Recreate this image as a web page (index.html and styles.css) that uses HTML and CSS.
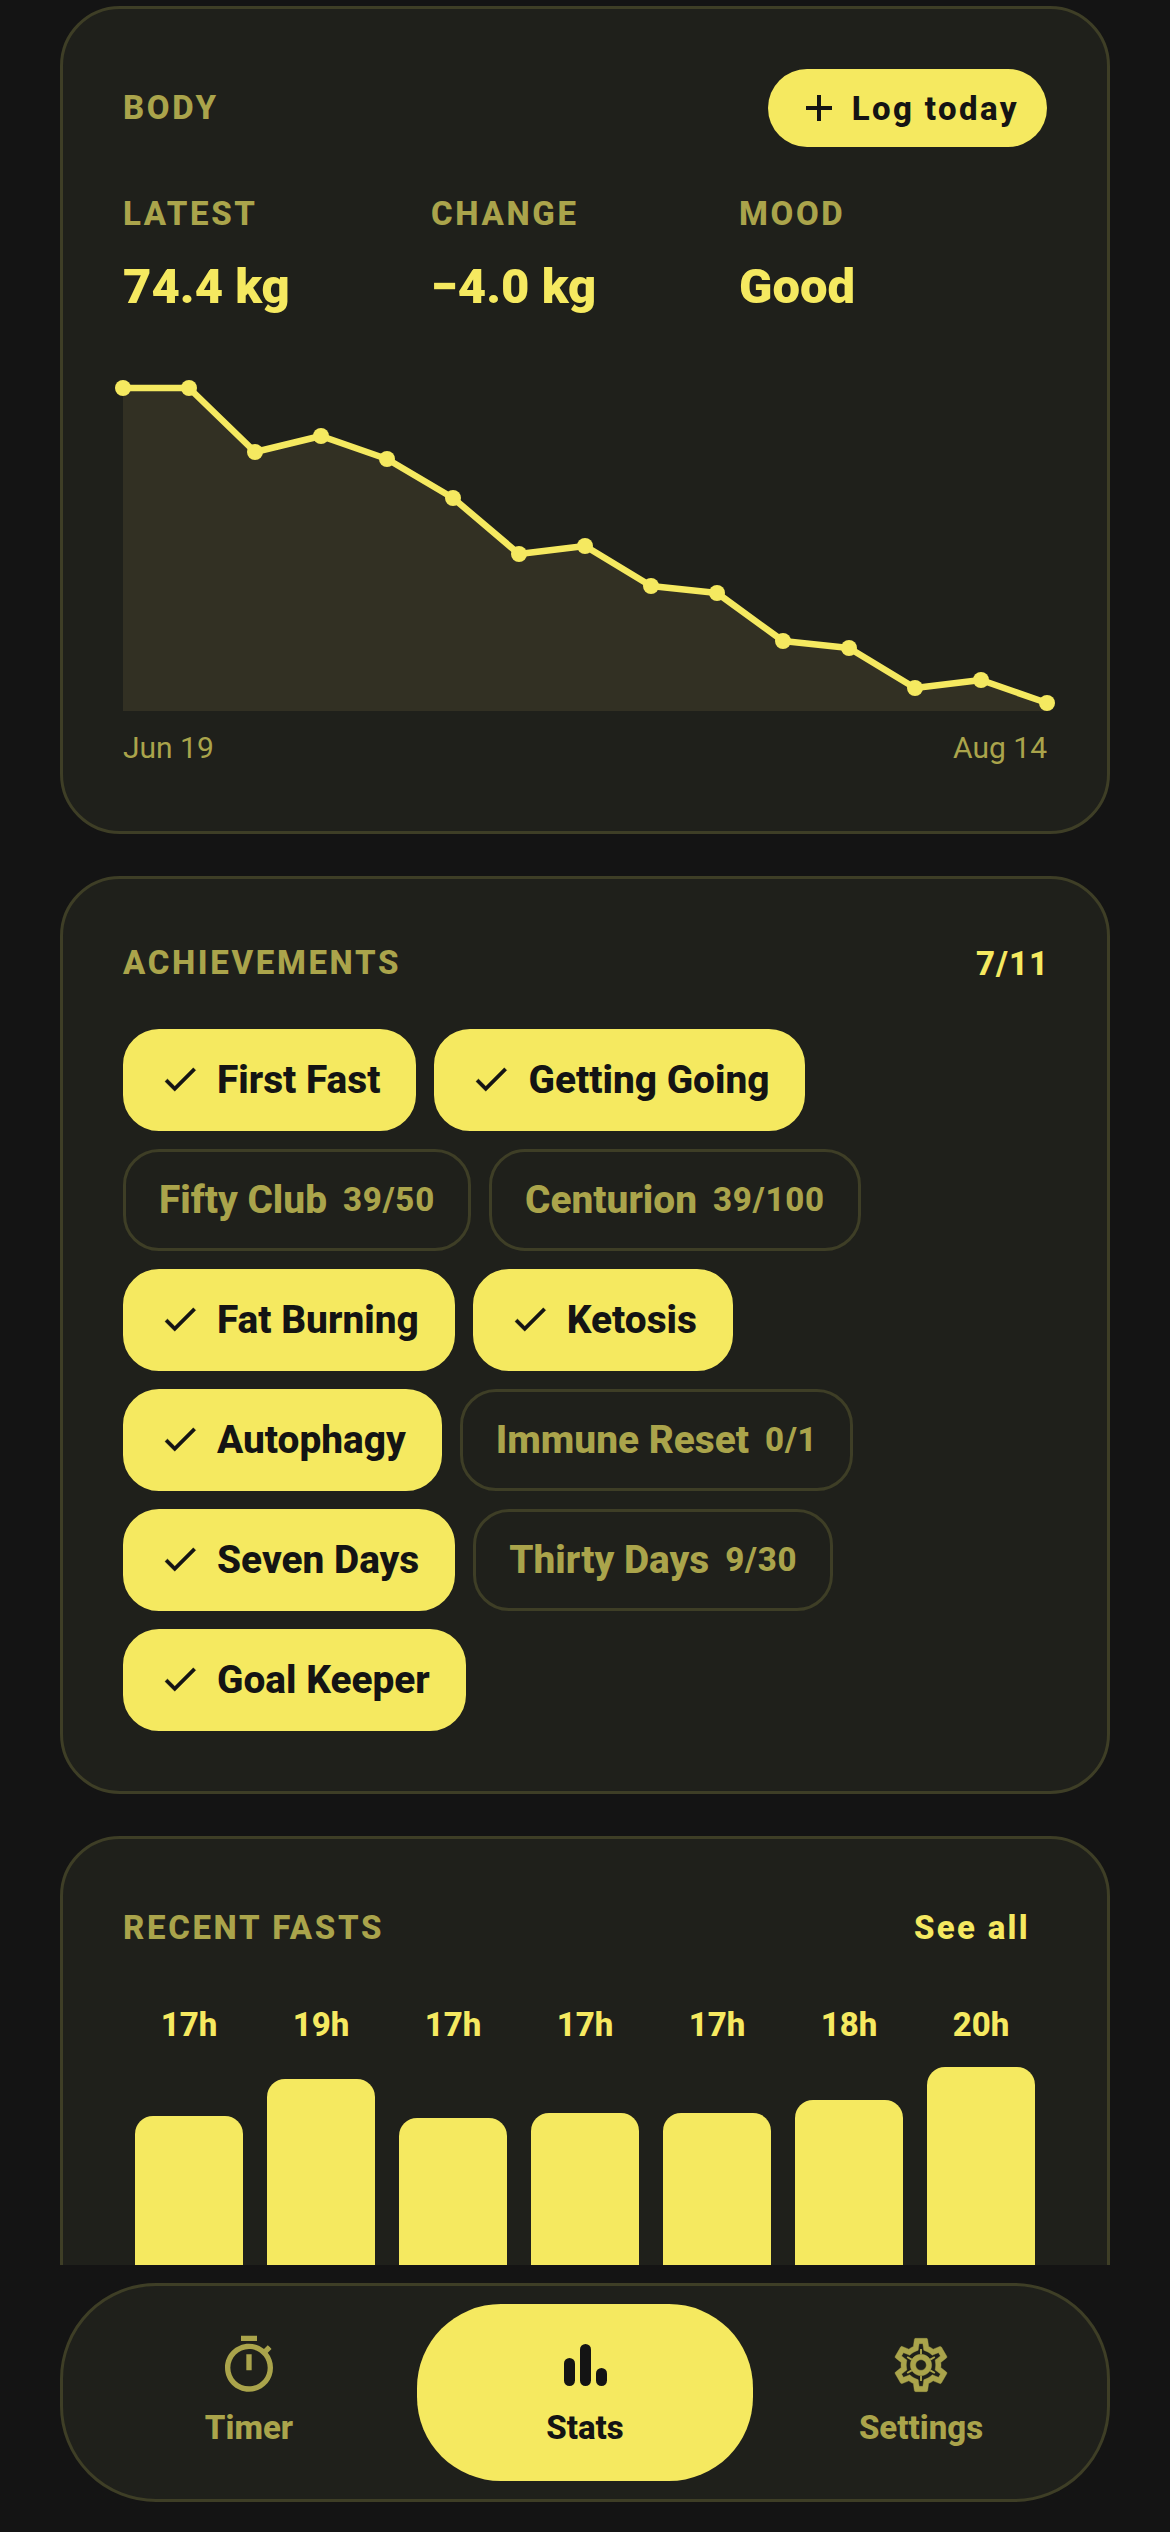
FILE: index.html
```html
<!DOCTYPE html>
<html lang="en">
<head>
    <meta charset="UTF-8">
    <title>Stats</title>
    <link rel="stylesheet" href="styles.css">
</head>
<body>

<main class="scroll">
    <section class="card">
        <div class="card-head body-head">
            <span class="label">BODY</span>
            <button class="log-btn">
                <svg class="plus" viewBox="0 0 26 26"><path d="M13 0v26M0 13h26"/></svg>
                Log today
            </button>
        </div>
        <div class="stats">
            <div class="stat"><div class="label">LATEST</div><div class="value">74.4 kg</div></div>
            <div class="stat"><div class="label">CHANGE</div><div class="value">−4.0 kg</div></div>
            <div class="stat"><div class="label">MOOD</div><div class="value">Good</div></div>
        </div>
        <svg class="chart" viewBox="0 0 924 340">
            <polygon class="chart-fill" points="0,10 66,10 132,74 198,58 264,81 330,120 396,176 462,168 528,208 594,215 660,263 726,270 792,310 858,302 924,325 924,333 0,333"/>
            <polyline class="chart-line" points="0,10 66,10 132,74 198,58 264,81 330,120 396,176 462,168 528,208 594,215 660,263 726,270 792,310 858,302 924,325"/>
            <g class="chart-dots">
                <circle cx="0" cy="10" r="8"/><circle cx="66" cy="10" r="8"/><circle cx="132" cy="74" r="8"/>
                <circle cx="198" cy="58" r="8"/><circle cx="264" cy="81" r="8"/><circle cx="330" cy="120" r="8"/>
                <circle cx="396" cy="176" r="8"/><circle cx="462" cy="168" r="8"/><circle cx="528" cy="208" r="8"/>
                <circle cx="594" cy="215" r="8"/><circle cx="660" cy="263" r="8"/><circle cx="726" cy="270" r="8"/>
                <circle cx="792" cy="310" r="8"/><circle cx="858" cy="302" r="8"/><circle cx="924" cy="325" r="8"/>
            </g>
        </svg>
        <div class="axis"><span>Jun 19</span><span>Aug 14</span></div>
    </section>

    <section class="card">
        <div class="card-head ach-head">
            <span class="label">ACHIEVEMENTS</span>
            <span class="count">7/11</span>
        </div>
        <div class="chips">
            <div class="chip done"><svg class="check" viewBox="0 0 24 24"><path d="M9 16.17L4.83 12l-1.42 1.41L9 19 21 7l-1.41-1.41z"/></svg>First Fast</div>
            <div class="chip done"><svg class="check" viewBox="0 0 24 24"><path d="M9 16.17L4.83 12l-1.42 1.41L9 19 21 7l-1.41-1.41z"/></svg>Getting Going</div>
            <div class="chip">Fifty Club<span class="progress">39/50</span></div>
            <div class="chip">Centurion<span class="progress">39/100</span></div>
            <div class="chip done"><svg class="check" viewBox="0 0 24 24"><path d="M9 16.17L4.83 12l-1.42 1.41L9 19 21 7l-1.41-1.41z"/></svg>Fat Burning</div>
            <div class="chip done"><svg class="check" viewBox="0 0 24 24"><path d="M9 16.17L4.83 12l-1.42 1.41L9 19 21 7l-1.41-1.41z"/></svg>Ketosis</div>
            <div class="chip done"><svg class="check" viewBox="0 0 24 24"><path d="M9 16.17L4.83 12l-1.42 1.41L9 19 21 7l-1.41-1.41z"/></svg>Autophagy</div>
            <div class="chip">Immune Reset<span class="progress">0/1</span></div>
            <div class="chip done"><svg class="check" viewBox="0 0 24 24"><path d="M9 16.17L4.83 12l-1.42 1.41L9 19 21 7l-1.41-1.41z"/></svg>Seven Days</div>
            <div class="chip">Thirty Days<span class="progress">9/30</span></div>
            <div class="chip done"><svg class="check" viewBox="0 0 24 24"><path d="M9 16.17L4.83 12l-1.42 1.41L9 19 21 7l-1.41-1.41z"/></svg>Goal Keeper</div>
        </div>
    </section>

    <section class="card">
        <div class="card-head">
            <span class="label">RECENT FASTS</span>
            <span class="see-all">See all</span>
        </div>
        <div class="bars">
            <div class="bar-col"><div class="bar-hours">17h</div><div class="bar-slot"><div class="bar" style="height: 211px"></div></div></div>
            <div class="bar-col"><div class="bar-hours">19h</div><div class="bar-slot"><div class="bar" style="height: 248px"></div></div></div>
            <div class="bar-col"><div class="bar-hours">17h</div><div class="bar-slot"><div class="bar" style="height: 209px"></div></div></div>
            <div class="bar-col"><div class="bar-hours">17h</div><div class="bar-slot"><div class="bar" style="height: 214px"></div></div></div>
            <div class="bar-col"><div class="bar-hours">17h</div><div class="bar-slot"><div class="bar" style="height: 214px"></div></div></div>
            <div class="bar-col"><div class="bar-hours">18h</div><div class="bar-slot"><div class="bar" style="height: 227px"></div></div></div>
            <div class="bar-col"><div class="bar-hours">20h</div><div class="bar-slot"><div class="bar" style="height: 260px"></div></div></div>
        </div>
    </section>
</main>

<nav class="tabbar">
    <div class="tab">
        <svg class="tab-icon" viewBox="0 0 24 24"><path d="M15 1H9v2h6V1zm-4 13h2V8h-2v6zm8.03-6.61l1.42-1.42c-.43-.51-.9-.99-1.41-1.41l-1.42 1.42C16.07 4.74 14.12 4 12 4c-4.97 0-9 4.03-9 9s4.02 9 9 9 9-4.03 9-9c0-2.12-.74-4.07-1.97-5.61zM12 20c-3.87 0-7-3.13-7-7s3.13-7 7-7 7 3.13 7 7-3.13 7-7 7z"/></svg>
        <span>Timer</span>
    </div>
    <div class="tab active">
        <svg class="tab-icon" viewBox="0 0 64 64"><rect x="11" y="25" width="11" height="28" rx="5.5"/><rect x="27" y="11" width="11" height="42" rx="5.5"/><rect x="43" y="35" width="11" height="18" rx="5.5"/></svg>
        <span>Stats</span>
    </div>
    <div class="tab">
        <svg class="tab-icon gear" viewBox="0 0 24 24">
            <path d="M19.43 12.98c.04-.32.07-.64.07-.98 0-.34-.03-.66-.07-.98l2.11-1.65c.19-.15.24-.42.12-.64l-2-3.46c-.12-.22-.39-.3-.61-.22l-2.49 1c-.52-.4-1.08-.73-1.69-.98l-.38-2.65C14.46 2.18 14.25 2 14 2h-4c-.25 0-.46.18-.49.42l-.38 2.65c-.61.25-1.17.59-1.69.98l-2.49-1c-.23-.09-.49 0-.61.22l-2 3.46c-.13.22-.07.49.12.64l2.11 1.65c-.04.32-.07.65-.07.98 0 .33.03.66.07.98l-2.11 1.65c-.19.15-.24.42-.12.64l2 3.46c.12.22.39.3.61.22l2.49-1c.52.4 1.08.73 1.69.98l.38 2.65c.03.24.24.42.49.42h4c.25 0 .46-.18.49-.42l.38-2.65c.61-.25 1.17-.59 1.69-.98l2.49 1c.23.09.49 0 .61-.22l2-3.46c.12-.22.07-.49-.12-.64l-2.11-1.65zM17.45 11.27c.04.31.05.52.05.73 0 .21-.02.43-.05.73l-.14 1.13.89.7 1.08.84-.7 1.21-1.27-.51-1.04-.42-.9.68c-.43.32-.84.56-1.25.73l-1.06.43-.16 1.13-.2 1.35h-1.4l-.19-1.35-.16-1.13-1.06-.43c-.43-.18-.83-.41-1.23-.71l-.91-.7-1.06.43-1.27.51-.7-1.21 1.08-.84.89-.7-.14-1.13c-.03-.31-.05-.54-.05-.74s.02-.43.05-.73l.14-1.13-.89-.7-1.08-.84.7-1.21 1.27.51 1.04.42.9-.68c.43-.32.84-.56 1.25-.73l1.06-.43.16-1.13.2-1.35h1.39l.19 1.35.16 1.13 1.06.43c.43.18.83.41 1.23.71l.91.7 1.06-.43 1.27-.51.7 1.21-1.07.85-.89.7.14 1.13zM12 8c-2.21 0-4 1.79-4 4s1.79 4 4 4 4-1.79 4-4-1.79-4-4-4zm0 6c-1.1 0-2-.9-2-2s.9-2 2-2 2 .9 2 2-.9 2-2 2z"/>
            <path class="gear-spokes" d="M12 8V6M12 16v2M15.46 10l1.73-1M8.54 14l-1.73 1M8.54 10l-1.73-1M15.46 14l1.73 1"/>
        </svg>
        <span>Settings</span>
    </div>
</nav>

</body>
</html>
```

FILE: styles.css
```css
* {
    box-sizing: border-box;
}
body {
    margin: 0;
    height: 2532px;
    overflow: hidden;
    background: #141414;
    color: #f5e960;
    font-family: Roboto, "Liberation Sans", sans-serif;
}
.scroll {
    height: 2265px;
    overflow: hidden;
    padding: 6px 60px 0;
    display: flex;
    flex-direction: column;
    gap: 42px;
}
.card {
    flex: none;
    background: #1f201b;
    border: 3px solid #3e3e26;
    border-radius: 60px;
    padding: 60px;
}
.card-head {
    display: flex;
    justify-content: space-between;
    align-items: center;
}
.label {
    font-size: 33px;
    line-height: 42px;
    font-weight: 800;
    letter-spacing: 2.64px;
    color: #aaa44b;
}
.log-btn {
    display: flex;
    align-items: center;
    gap: 20px;
    height: 78px;
    padding: 0 28px 0 38px;
    border: none;
    border-radius: 39px;
    background: #f5e960;
    color: #141414;
    font-family: inherit;
    font-size: 33px;
    font-weight: 800;
    letter-spacing: 2.4px;
}
.plus {
    width: 26px;
    height: 26px;
    fill: none;
    stroke: #141414;
    stroke-width: 4;
}
.stats {
    display: flex;
    margin-top: 46px;
}
.stat {
    flex: 1;
}
.value {
    margin-top: 22px;
    font-size: 49px;
    line-height: 60px;
    font-weight: 900;
}
.chart {
    display: block;
    width: 924px;
    height: 340px;
    margin-top: 61px;
    overflow: visible;
}
.chart-fill {
    fill: #323023;
}
.chart-line {
    fill: none;
    stroke: #f5e960;
    stroke-width: 6.5;
    stroke-linejoin: round;
}
.chart-dots {
    fill: #f5e960;
}
.axis {
    display: flex;
    justify-content: space-between;
    margin-top: 9px;
    padding-bottom: 2px;
    font-size: 30px;
    line-height: 42px;
    color: #aaa44b;
}
.ach-head {
    height: 48px;
}
.count {
    margin-right: -2px;
    font-size: 33px;
    font-weight: 800;
    letter-spacing: 1px;
}
.chips {
    display: flex;
    flex-wrap: wrap;
    gap: 18px;
    margin-top: 42px;
}
.chip {
    display: flex;
    align-items: center;
    height: 102px;
    padding: 0 33px 2px;
    border: 3px solid #3e3e26;
    border-radius: 36px;
    font-size: 38.8px;
    font-weight: 800;
    color: #aaa44b;
}
.chip.done {
    background: #f5e960;
    border-color: #f5e960;
    color: #141414;
}
.check {
    width: 42px;
    height: 42px;
    margin-right: 16px;
    fill: #141414;
    stroke: #141414;
    stroke-width: 0.2;
}
.progress {
    margin-left: 16px;
    font-size: 33px;
    letter-spacing: 0.8px;
}
.see-all {
    padding: 8px 17px 8px 20px;
    font-size: 33px;
    line-height: 42px;
    font-weight: 800;
    letter-spacing: 2.3px;
}
.bars {
    display: flex;
    margin-top: 47px;
}
.bar-col {
    flex: 1;
}
.bar-hours {
    text-align: center;
    font-size: 33px;
    line-height: 42px;
    font-weight: 800;
}
.bar-slot {
    display: flex;
    align-items: flex-end;
    height: 260px;
    margin-top: 21px;
    padding: 0 12px;
}
.bar {
    width: 100%;
    background: #f5e960;
    border-radius: 18px 18px 0 0;
}
.tabbar {
    display: flex;
    height: 219px;
    margin: 18px 60px 0;
    padding: 18px;
    background: #1f201b;
    border: 3px solid #3e3e26;
    border-radius: 96px;
}
.tab {
    flex: 1;
    display: flex;
    flex-direction: column;
    align-items: center;
    justify-content: center;
    gap: 10px;
    padding-bottom: 4px;
    border-radius: 84px;
    font-size: 33px;
    line-height: 42px;
    font-weight: 800;
    color: #aaa44b;
}
.tab.active {
    background: #f5e960;
    color: #141414;
}
.tab-icon {
    width: 64px;
    height: 64px;
    fill: currentColor;
}
.gear path {
    stroke: currentColor;
    stroke-width: 0.15;
}
.gear .gear-spokes {
    fill: none;
    stroke-width: 0.7;
}
```
